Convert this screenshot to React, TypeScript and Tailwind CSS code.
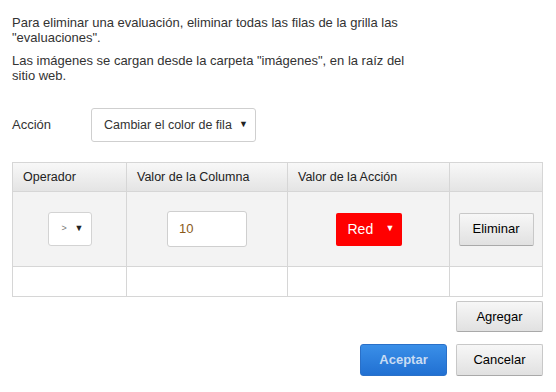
import React from 'react';

function GrayButton({ label, className = '' }: { label: string; className?: string }) {
  return (
    <button
      className={
        'flex items-center justify-center rounded-[2px] border border-[#c8c8c8] border-b-[#a9a9a9] bg-gradient-to-b from-[#f7f7f7] to-[#e1e1e1] text-[13px] text-black ' +
        className
      }>
      {label}
    </button>
  );
}

export default function App() {
  return (
    <div className="w-[556px] h-[392px] bg-white text-[#333] font-['Liberation_Sans',Arial,sans-serif] text-[13px]">
      <div className="pl-[12px] pt-[15px] w-[410px] leading-[15px]">
        <p>
          Para eliminar una evaluación, eliminar todas las filas de la grilla las
          "evaluaciones".
        </p>
        <p className="mt-[8px]">
          Las imágenes se cargan desde la carpeta "imágenes", en la raíz del
          sitio web.
        </p>
      </div>

      <div className="flex items-center mt-[25px] pl-[12px]">
        <span className="w-[79px]">Acción</span>
        <div className="flex items-center justify-between w-[165px] h-[34px] rounded-[3px] border border-[#cfcfcf] bg-white pl-[12px] pr-[7px]">
          <span className="text-[12.5px]">Cambiar el color de fila</span>
          <span className="text-[9px] text-[#222]">▼</span>
        </div>
      </div>

      <div className="ml-[12px] mt-[20px] w-[531px] border border-[#d6d6d6]">
        <div className="grid grid-cols-[114px_161px_162px_1fr] h-[29px] bg-gradient-to-b from-[#f8f8f8] to-[#e4e4e4] border-b border-[#d6d6d6] text-[12.5px] text-[#222]">
          <div className="flex items-center pl-[10px] border-r border-[#d6d6d6]">Operador</div>
          <div className="flex items-center pl-[10px] border-r border-[#d6d6d6]">Valor de la Columna</div>
          <div className="flex items-center pl-[10px] border-r border-[#d6d6d6]">Valor de la Acción</div>
          <div />
        </div>
        <div className="grid grid-cols-[114px_161px_162px_1fr] h-[75px] bg-[#f3f3f3] border-b border-[#d6d6d6]">
          <div className="flex items-center justify-center border-r border-[#d6d6d6]">
            <div className="flex items-center justify-between w-[44px] h-[34px] rounded-[3px] border border-[#d3d3d3] bg-white pl-[13px] pr-[7px]">
              <span className="text-[9px] text-[#777]">&gt;</span>
              <span className="text-[9px] text-[#222]">▼</span>
            </div>
          </div>
          <div className="flex items-center justify-center border-r border-[#d6d6d6]">
            <div className="flex items-center w-[80px] h-[36px] rounded-[3px] border border-[#cfcfcf] bg-white pl-[11px] text-[#8a5a1a]">
              10
            </div>
          </div>
          <div className="flex items-center justify-center border-r border-[#d6d6d6]">
            <div className="flex items-center justify-between w-[66px] h-[33px] rounded-[2px] bg-[#ff0000] pl-[12px] pr-[7px] text-white text-[14px]">
              <span>Red</span>
              <span className="text-[9px]">▼</span>
            </div>
          </div>
          <div className="flex items-center justify-center">
            <GrayButton label="Eliminar" className="w-[75px] h-[33px]" />
          </div>
        </div>
        <div className="grid grid-cols-[114px_161px_162px_1fr] h-[29px] bg-white">
          <div className="border-r border-[#d6d6d6]" />
          <div className="border-r border-[#d6d6d6]" />
          <div className="border-r border-[#d6d6d6]" />
          <div />
        </div>
      </div>

      <div className="flex justify-end w-[543px] mt-[4px]">
        <GrayButton label="Agregar" className="w-[87px] h-[31px]" />
      </div>
      <div className="flex justify-end gap-[9px] w-[543px] mt-[12px]">
        <button className="flex items-center justify-center w-[87px] h-[32px] rounded-[3px] border border-[#2a70c8] bg-gradient-to-b from-[#3a8fe8] to-[#2170d2] text-[13px] font-bold text-[#c9dcf3]">
          Aceptar
        </button>
        <GrayButton label="Cancelar" className="w-[87px] h-[32px]" />
      </div>
    </div>
  );
}
